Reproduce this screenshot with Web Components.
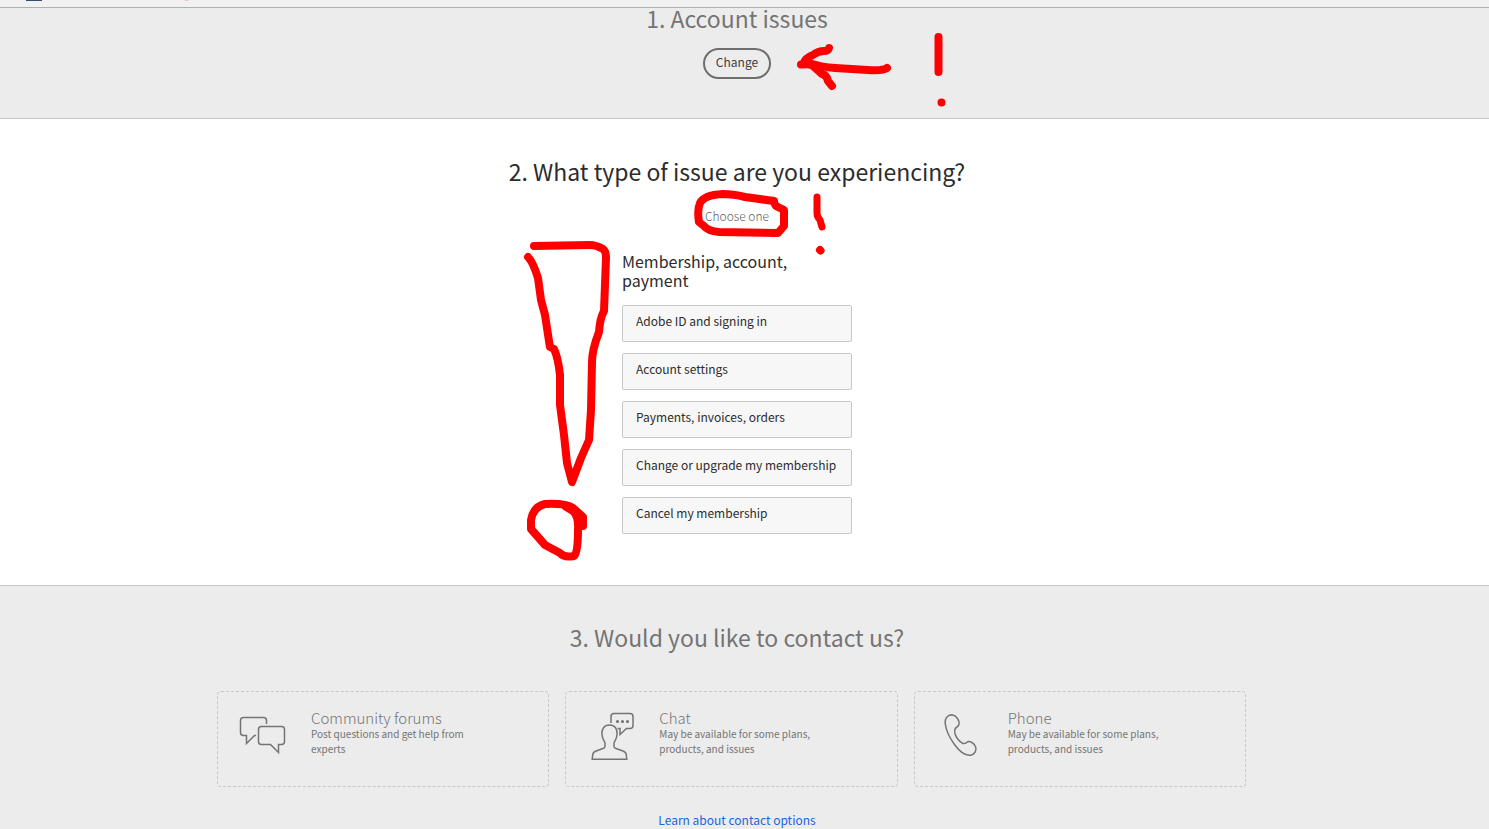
<!DOCTYPE html>
<html lang="en">
<head>
<meta charset="utf-8">
<title>Contact support</title>
<style>
  body {
    margin: 0;
    background: #ececec;
    color: #2c2c2c;
    font-family: "Noto Sans CJK SC", "Open Sans", sans-serif;
    font-size: 12px;
  }
</style>
</head>
<body>
<support-page>
  <top-strip></top-strip>
  <support-step class="first" heading="1. Account issues" muted>
    <pill-button>Change</pill-button>
  </support-step>
  <support-step class="second" heading="2. What type of issue are you experiencing?" hint="Choose one">
    <issue-group heading="Membership, account, payment">
      <issue-option>Adobe ID and signing in</issue-option>
      <issue-option>Account settings</issue-option>
      <issue-option>Payments, invoices, orders</issue-option>
      <issue-option>Change or upgrade my membership</issue-option>
      <issue-option>Cancel my membership</issue-option>
    </issue-group>
  </support-step>
  <support-step class="third" heading="3. Would you like to contact us?" muted>
    <contact-list>
      <contact-card icon="forums" heading="Community forums">Post questions and get help from experts</contact-card>
      <contact-card icon="chat" heading="Chat">May be available for some plans, products, and issues</contact-card>
      <contact-card icon="phone" heading="Phone">May be available for some plans, products, and issues</contact-card>
    </contact-list>
    <text-link>Learn about contact options</text-link>
  </support-step>
  <ink-layer></ink-layer>
</support-page>

<script>
function makeTemplate(html) {
  const template = document.createElement('template');
  template.innerHTML = html;
  return template;
}

class BaseElement extends HTMLElement {
  connectedCallback() {
    if (this.shadowRoot) return;
    this.attachShadow({ mode: 'open' });
    this.shadowRoot.appendChild(this.constructor.template.content.cloneNode(true));
    this.render();
  }

  render() {}
}

class SupportPage extends BaseElement {
  static template = makeTemplate(`
    <style>
      :host {
        display: flex;
        flex-direction: column;
        position: relative;
        min-height: 100vh;
      }

      ::slotted(.first) {
        padding-bottom: 39px;
        border-bottom: 1px solid #c8c8c8;
      }

      ::slotted(.second) {
        padding-top: 42px;
        padding-bottom: 51px;
        background: #fff;
        border-bottom: 1px solid #c8c8c8;
      }

      ::slotted(.third) {
        padding-top: 41px;
      }
    </style>
    <slot></slot>
  `);
}

class TopStrip extends BaseElement {
  static template = makeTemplate(`
    <style>
      :host {
        display: block;
        height: 7px;
        background: #f1f1f1;
        border-bottom: 1px solid #b0b0b0;
      }

      svg {
        display: block;
      }
    </style>
    <svg width="200" height="7" aria-hidden="true">
      <rect x="26" width="16" height="1" fill="#3a4c6e"/>
      <rect x="185" width="3" height="1" fill="#f3bcc8"/>
    </svg>
  `);
}

class SupportStep extends BaseElement {
  static template = makeTemplate(`
    <style>
      :host {
        display: flex;
        flex-direction: column;
        align-items: center;
        padding-right: 15px;
      }

      h2 {
        margin: 0;
        padding-bottom: 4px;
        font-size: 23px;
        line-height: 20px;
        font-weight: 400;
        text-align: center;
      }

      :host([muted]) h2 {
        color: #747474;
      }

      p {
        margin: 23px 0 0;
        font-size: 12px;
        line-height: 16px;
        font-weight: 300;
        color: #606060;
      }
    </style>
    <h2></h2>
    <p></p>
    <slot></slot>
  `);

  render() {
    this.shadowRoot.querySelector('h2').textContent = this.getAttribute('heading');
    const hint = this.shadowRoot.querySelector('p');
    if (this.hasAttribute('hint')) {
      hint.textContent = this.getAttribute('hint');
    } else {
      hint.remove();
    }
  }
}

class PillButton extends BaseElement {
  static template = makeTemplate(`
    <style>
      :host {
        display: block;
        margin-top: 16px;
      }

      button {
        display: block;
        height: 31px;
        padding: 0 11px 4px;
        border: 2px solid #6e6e6e;
        border-radius: 16px;
        background: transparent;
        color: #3c3c3c;
        font: inherit;
        line-height: 16px;
        cursor: pointer;
      }
    </style>
    <button type="button"><slot></slot></button>
  `);
}

class IssueGroup extends BaseElement {
  static template = makeTemplate(`
    <style>
      :host {
        display: flex;
        flex-direction: column;
        gap: 11px;
        width: 230px;
        margin-top: 28px;
      }

      h3 {
        margin: 0 0 4px;
        padding-right: 40px;
        font-size: 16px;
        line-height: 19px;
        font-weight: 400;
      }
    </style>
    <h3></h3>
    <slot></slot>
  `);

  render() {
    this.shadowRoot.querySelector('h3').textContent = this.getAttribute('heading');
  }
}

class IssueOption extends BaseElement {
  static template = makeTemplate(`
    <style>
      :host {
        display: block;
      }

      button {
        display: block;
        box-sizing: border-box;
        width: 100%;
        height: 37px;
        padding: 0 13px 6px;
        border: 1px solid #c8c8c8;
        border-radius: 2px;
        background: #f7f7f7;
        color: inherit;
        font: inherit;
        line-height: 16px;
        text-align: left;
        cursor: pointer;
      }
    </style>
    <button type="button"><slot></slot></button>
  `);
}

class ContactList extends BaseElement {
  static template = makeTemplate(`
    <style>
      :host {
        display: grid;
        grid-template-columns: repeat(3, 1fr);
        gap: 16px;
        box-sizing: border-box;
        width: 100%;
        max-width: 1040px;
        margin-top: 40px;
        padding-right: 11px;
      }
    </style>
    <slot></slot>
  `);
}

const cardIcons = {
  forums: `
    <path d="M27.500 12V8.500Q27.500 5.500 24.500 5.500H4.500Q1.500 5.500 1.500 8.500V20.500Q1.500 23.500 4.500 23.500H7.500V31.500L15.500 23.500H17"/>
    <path d="M22.500 14.500H42.500Q45.500 14.500 45.500 17.500V29.500Q45.500 32.500 42.500 32.500H39.500V40.500L31.500 32.500H22.500Q19.500 32.500 19.500 29.500V17.500Q19.500 14.500 22.500 14.500Z"/>`,
  chat: `
    <g transform="translate(2.500 0)">
      <path d="M21.500 11V4.500Q21.500 1.500 24.500 1.500H40.500Q43.500 1.500 43.500 4.500V13.500Q43.500 16.500 40.500 16.500H37L30.500 22.500V16.500H28"/>
      <path d="M20 13C14.500 13 12 17 12.500 22.500C12.800 27 14.500 28.500 15.500 31V34.500Q15.300 36 13.500 36.500L6.500 39Q3.500 40 3.200 43L2.700 47.300H37.300L36.800 43Q36.500 40 33.500 39L26.500 36.500Q24.700 36 24.500 34.500V31C25.500 28.500 27.200 27 27.500 22.500C28 17 25.500 13 20 13Z"/>
      <g fill="#6e6e6e" stroke="none"><circle cx="28" cy="9.500" r="1.500"/><circle cx="33" cy="9.500" r="1.500"/><circle cx="38" cy="9.500" r="1.500"/></g>
    </g>`,
  phone: `
    <path transform="translate(1.500 0)" d="M10 4.500C13 1.800 17.500 2.500 20 6.500C22.500 10.500 22 13.500 19.500 15C17 16.500 16.500 18 17.500 21.500C18.500 25 21.500 29 24.500 31C26.500 32.200 28 31.500 29.500 30.200C32 28.500 36 30.500 38 34.500C39.500 38 37.500 42.500 33 43.200C28 44 22.500 40 17 32.500C11.500 25 8.500 17.500 7.800 12C7.400 8.500 8 6.200 10 4.500Z"/>`
};

class ContactCard extends BaseElement {
  static template = makeTemplate(`
    <style>
      :host {
        display: block;
      }

      a {
        display: flex;
        gap: 24px;
        box-sizing: border-box;
        height: 96px;
        padding: 17px 21px;
        border: 1px dashed #c8c8c8;
        border-radius: 4px;
        color: #747474;
        text-decoration: none;
      }

      svg {
        flex: none;
        width: 48px;
        height: 48px;
        margin-top: 3px;
        fill: none;
        stroke: #747474;
        stroke-width: 1.5;
      }

      h3 {
        margin: 0;
        font-size: 15px;
        line-height: 17px;
        font-weight: 300;
      }

      p {
        margin: 0;
        max-width: 168px;
        font-size: 10px;
        line-height: 15px;
      }
    </style>
    <a href="#">
      <svg viewBox="0 0 48 48" aria-hidden="true"></svg>
      <div>
        <h3></h3>
        <p><slot></slot></p>
      </div>
    </a>
  `);

  render() {
    this.shadowRoot.querySelector('svg').innerHTML = cardIcons[this.getAttribute('icon')];
    this.shadowRoot.querySelector('h3').textContent = this.getAttribute('heading');
  }
}

class TextLink extends BaseElement {
  static template = makeTemplate(`
    <style>
      :host {
        display: block;
        margin-top: 25px;
        line-height: 16px;
      }

      a {
        color: #1468e0;
        text-decoration: none;
      }
    </style>
    <a href="#"><slot></slot></a>
  `);
}

// hand drawn marks over the page, kept centred with the content
class InkLayer extends BaseElement {
  static template = makeTemplate(`
    <style>
      :host {
        position: absolute;
        inset: 0;
        overflow: hidden;
        pointer-events: none;
      }

      svg {
        display: block;
        width: 100%;
        height: 829px;
        fill: none;
        stroke: #f00;
        stroke-width: 8;
        stroke-linecap: round;
        stroke-linejoin: round;
      }
    </style>
    <svg viewBox="0 0 1489 829" aria-hidden="true">
      <path d="M829 48Q828 51 824 51Q818 51 813 55Q805 58 804 63"/>
      <path d="M801 64.500L812 64Q822 67 835 68L868 70Q883 71 887 68"/>
      <path d="M808 64L812 65L822 74Q827 75 828 81L832 86"/>
      <path d="M938.500 37V72M941.500 102.500V102.600"/>
      <path d="M774 201L745 197Q733 194 723 194Q704 195 700 203Q697 210 699 222L704 226Q708 231 719 232L778 233L784 226V210L776 206L773 201"/>
      <path stroke-width="7" d="M817 197V213Q817 217 820 220L822 227"/>
      <path d="M820 250L820.500 250.500"/>
      <path d="M534 246L590 245Q596 245 603 249Q606 251 606 258L604 311Q600 318 599 332Q592 350 592 362L591 410L589 440L581 458L572 482L567 463L564 435L560 405L560 375Q558 357 554 349L550 347L549 341L545 315L541 300L538 278Q533 262 528 257"/>
      <path d="M583 526V517L573 508Q566 503 545 504Q533 507 531 520V529L545 545L560 553Q564 558 574 556Q578 554 578 530Q579 517 573 511L565 506"/>
    </svg>
  `);
}

customElements.define('support-page', SupportPage);
customElements.define('top-strip', TopStrip);
customElements.define('support-step', SupportStep);
customElements.define('pill-button', PillButton);
customElements.define('issue-group', IssueGroup);
customElements.define('issue-option', IssueOption);
customElements.define('contact-list', ContactList);
customElements.define('contact-card', ContactCard);
customElements.define('text-link', TextLink);
customElements.define('ink-layer', InkLayer);
</script>
</body>
</html>
